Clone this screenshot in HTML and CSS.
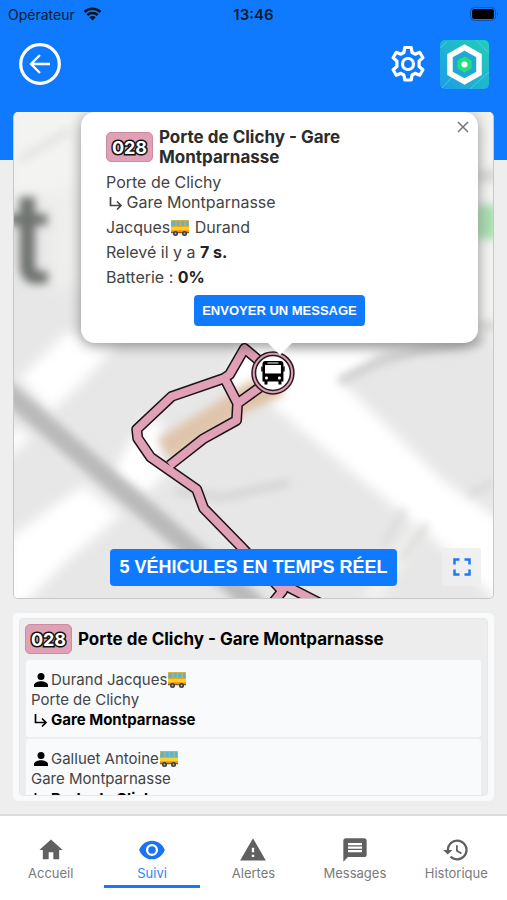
FILE: index.html
```html
<!DOCTYPE html>
<html lang="fr">
<head>
    <meta charset="UTF-8">
    <meta name="viewport" content="width=device-width, initial-scale=1.0">
    <title>Suivi</title>
    <link rel="stylesheet" href="styles.css">
</head>
<body>
    <!-- Shared icons -->
    <svg class="sprite" aria-hidden="true">
        <symbol id="bus-emoji" viewBox="0 0 20 18">
            <rect x="1" y="1" width="18" height="13" rx="2" fill="#f9a51a"/>
            <path d="M2 1h16l1 6H1z" fill="#58b7d3"/>
            <path d="M1 1.500h18M6 2v5M10.500 2v5M15 2v5" stroke="#d7b04b" stroke-width="1.200"/>
            <path d="M1 8h18v3H1z" fill="#ffd02e"/>
            <path d="M1 13.500h18" stroke="#8f5a2b" stroke-width="1.500"/>
            <circle cx="5.500" cy="14.500" r="2.500" fill="#3c3836"/>
            <circle cx="14.500" cy="14.500" r="2.500" fill="#3c3836"/>
            <circle cx="5.500" cy="14.500" r="1" fill="#b5b5b5"/>
            <circle cx="14.500" cy="14.500" r="1" fill="#b5b5b5"/>
        </symbol>
        <symbol id="arrow-sub" viewBox="0 0 16 16">
            <path d="M2.500 2v8.500h10M9 6.500l4 4-4 4" fill="none" stroke="currentColor" stroke-width="1.700"/>
        </symbol>
        <symbol id="person" viewBox="0 0 16 16">
            <circle cx="8" cy="4.500" r="3.500" fill="currentColor"/>
            <path d="M1 15v-2c0-2.500 4.500-3.800 7-3.800s7 1.300 7 3.800v2z" fill="currentColor"/>
        </symbol>
    </svg>

    <div class="status-bar">
        <span class="carrier">Opérateur
            <svg width="19" height="14" viewBox="0 0 19 14">
                <path d="M1.500 5a11.500 11.500 0 0 1 16 0M4.300 8a7.500 7.500 0 0 1 10.400 0" fill="none" stroke="#0a1520" stroke-width="2.500"/>
                <path d="M6.300 10.200a4.600 4.600 0 0 1 6.400 0L9.500 13.500z" fill="#0a1520"/>
            </svg>
        </span>
        <span class="clock">13:46</span>
        <svg class="battery" width="29" height="14" viewBox="0 0 29 14">
            <rect x="0.500" y="0.500" width="25" height="13" rx="4" fill="none" stroke="#0b55ad"/>
            <rect x="2" y="2" width="22" height="10" rx="2.500" fill="#000"/>
            <path d="M27 5q2 2 0 4z" fill="#0b55ad"/>
        </svg>
    </div>

    <header class="toolbar">
        <button class="icon-button" type="button" aria-label="Retour">
            <svg width="44" height="44" viewBox="0 0 44 44" fill="none" stroke="#fff">
                <circle cx="22" cy="22" r="19.300" stroke-width="3.200"/>
                <path d="M32 22H13M22 13l-9 9 9 9" stroke-width="2.300"/>
            </svg>
        </button>
        <div class="toolbar-end">
            <button class="icon-button" type="button" aria-label="Réglages">
                <svg width="36" height="38" viewBox="0 0 36 38" fill="none" stroke="#fff" stroke-width="3.200" stroke-linejoin="round">
                    <path d="M14.800 2.500h6.400l.9 5 3 1.700 4.600-1.900 3.200 5.500-3.800 3.200v5.500l3.800 3.200-3.200 5.500-4.600-1.900-3 1.700-.9 5h-6.400l-.9-5-3-1.700-4.600 1.900-3.200-5.500 3.800-3.200V16l-3.800-3.200 3.200-5.500 4.600 1.900 3-1.700z"/>
                    <circle cx="18" cy="19" r="5.500"/>
                </svg>
            </button>
            <svg class="logo" width="49" height="49" viewBox="0 0 49 49">
                <defs>
                    <linearGradient id="logoFill" x1="0" y1="1" x2="1" y2="0">
                        <stop offset="0" stop-color="#1f9bea"/>
                        <stop offset="1" stop-color="#20cfb4"/>
                    </linearGradient>
                </defs>
                <rect width="49" height="49" rx="5" fill="url(#logoFill)"/>
                <path d="M0 8l7-6M2 48l11-12M36 0l13 13M30 49l19-17" stroke="#48c9e2" fill="none"/>
                <path d="M24.500 7.500l14.500 8v18l-14.500 8-14.500-8v-18z" fill="#1da9d4" stroke="#fff" stroke-width="5.500"/>
                <path d="M24.500 16.500l7 4v8l-7 4-7-4v-8z" fill="#25dd83"/>
                <circle cx="24.500" cy="24.500" r="3" fill="#fff"/>
            </svg>
        </div>
    </header>

    <main class="content">
        <section class="map">
            <svg class="map-canvas" viewBox="14 112 480 487" preserveAspectRatio="xMidYMid slice">
                <defs>
                    <filter id="soft" x="-30%" y="-30%" width="160%" height="160%">
                        <feGaussianBlur stdDeviation="6"/>
                    </filter>
                    <filter id="softer" x="-30%" y="-30%" width="160%" height="160%">
                        <feGaussianBlur stdDeviation="9"/>
                    </filter>
                    <filter id="edge" x="-30%" y="-30%" width="160%" height="160%">
                        <feGaussianBlur stdDeviation="4"/>
                    </filter>
                </defs>
                <rect x="14" y="112" width="480" height="487" fill="#e7e7e7"/>

                <!-- Streets and blocks -->
                <g filter="url(#softer)">
                    <path d="M0 100h110v100H0zM450 100h60v240h-60z" fill="#f3f3f2"/>
                    <path d="M50 190h60v100H50z" fill="#efefee"/>
                </g>
                <g filter="url(#soft)" fill="#fff">
                    <path d="M20 378l48-46 50 12-35 38-32 30z"/>
                    <path d="M8 428l24 8-24 24z"/>
                    <path d="M8 540l75-54 38 30-52 44-45 45H8z"/>
                    <path d="M112 478l22-44 36 36-24 24z"/>
                    <path d="M140 425l20-5 5 30-15 10z"/>
                    <path d="M228 380l15-38h45l-20 45-28 20z"/>
                    <path d="M262 350h125l-46 32 105 101 58 40v85l-60-60-175-145z"/>
                    <path d="M362 600l50-70 12 5-45 68z" fill="#f3f3f0"/>
                </g>
                <g filter="url(#edge)" fill="none">
                    <path d="M4 390l103 88 78 66 74 65" stroke="#bababa" stroke-width="20"/>
                    <path d="M164 450l96-60" stroke="#e0c5ac" stroke-width="24"/>
                    <path d="M240 402l40-18" stroke="#dfc1a6" stroke-width="25"/>
                    <path d="M175 492l50 6 65-15" stroke="#d2d2d1" stroke-width="7"/>
                    <path d="M340 382l40-20 45-12 60-9" stroke="#cbcbca" stroke-width="8"/>
                    <path d="M385 545l20-35M403 560l25-35" stroke="#dcdcdb" stroke-width="7"/>
                    <path d="M470 495l24-12" stroke="#d8d8d7" stroke-width="6"/>
                    <path d="M20 160l50-30" stroke="#e4e4e2" stroke-width="8"/>
                    <path d="M478 205h20v34h-20z" fill="#a9dfb0" stroke="none"/>
                    <path d="M478 170h20v12h-20zM478 322h20v10h-20z" fill="#d8d8d6" stroke="none"/>
                </g>
                <text class="place-name" x="8" y="283" filter="url(#edge)">t</text>

                <!-- Route: dark casing first, then the line colour -->
                <g class="route route-casing">
                    <path id="routeMain" d="M270 370l-25-21-15 26-6 4-52 18-35 33 1 9 13 19 46 32 7 19 40 41 39 42-18 22M283 585l39 20"/>
                    <path id="routeLoop" d="M225 379l13 25-1 17-34 19-33 26M238 404l32-23"/>
                </g>
                <g class="route route-line">
                    <use href="#routeMain"/>
                    <use href="#routeLoop"/>
                </g>

                <!-- Vehicle marker -->
                <g>
                    <circle cx="273.500" cy="373.500" r="21" fill="#e0a0b5" stroke="#2a1b20" stroke-width="1.500"/>
                    <circle cx="273.500" cy="373.500" r="17.500" fill="#fff" stroke="#2a1b20" stroke-width="1.500"/>
                    <path d="M266 361.500h15q3 0 3 3v17.500h-2v3h-3v-3h-11v3h-3v-3h-2v-17.500q0-3 3-3z" fill="#000"/>
                    <path d="M265.500 365.500h16v8.500h-16z" fill="#fff"/>
                    <path d="M262.500 367v5M284.500 367v5" stroke="#000" stroke-width="1.500"/>
                    <path d="M268 363.500h11" stroke="#fff"/>
                    <circle cx="267" cy="378.500" r="1.500" fill="#fff"/>
                    <circle cx="280" cy="378.500" r="1.500" fill="#fff"/>
                </g>
            </svg>

            <div class="popup">
                <button class="popup-close" type="button" aria-label="Fermer">
                    <svg width="12" height="12" viewBox="0 0 12 12"><path d="M1 1l10 10M11 1L1 11" stroke="#757575" stroke-width="1.500"/></svg>
                </button>
                <div class="popup-title">
                    <span class="line-badge">028</span>
                    <h2>Porte de Clichy - Gare Montparnasse</h2>
                </div>
                <p class="trip">Porte de Clichy<br><svg class="icon-small"><use href="#arrow-sub"/></svg> Gare Montparnasse</p>
                <p>Jacques<svg class="emoji"><use href="#bus-emoji"/></svg> Durand</p>
                <p>Relevé il y a <strong>7 s.</strong></p>
                <p>Batterie : <strong>0%</strong></p>
                <button class="button button-small" type="button">ENVOYER UN MESSAGE</button>
            </div>

            <div class="map-actions">
                <button class="button button-large" type="button">5 VÉHICULES EN TEMPS RÉEL</button>
            </div>
            <button class="fullscreen" type="button" aria-label="Plein écran">
                <svg width="18" height="18" viewBox="0 0 18 18"><path d="M1.500 6.500v-5h5M11.500 1.500h5v5M16.500 11.500v5h-5M6.500 16.500h-5v-5" fill="none" stroke="#1a7bf5" stroke-width="2.500"/></svg>
            </button>
        </section>

        <section class="vehicles">
            <div class="vehicles-scroll">
                <div class="vehicles-title">
                    <span class="line-badge">028</span>
                    <h2>Porte de Clichy - Gare Montparnasse</h2>
                </div>
                <ul class="vehicle-list">
                    <li>
                        <div class="driver"><svg class="icon-small"><use href="#person"/></svg>Durand Jacques<svg class="emoji"><use href="#bus-emoji"/></svg></div>
                        <div>Porte de Clichy</div>
                        <div class="destination"><svg class="icon-small"><use href="#arrow-sub"/></svg>Gare Montparnasse</div>
                    </li>
                    <li>
                        <div class="driver"><svg class="icon-small"><use href="#person"/></svg>Galluet Antoine<svg class="emoji"><use href="#bus-emoji"/></svg></div>
                        <div>Gare Montparnasse</div>
                        <div class="destination"><svg class="icon-small"><use href="#arrow-sub"/></svg>Porte de Clichy</div>
                    </li>
                </ul>
            </div>
        </section>
    </main>

    <nav class="tabs">
        <a class="tab" href="#accueil">
            <svg width="28" height="28" viewBox="0 0 24 24"><path d="M10 20v-6h4v6h5v-8h3L12 3 2 12h3v8z"/></svg>
            <span>Accueil</span>
        </a>
        <a class="tab active" href="#suivi">
            <svg width="28" height="28" viewBox="0 0 24 24"><path d="M12 4C7 4 2.700 7.300 1 12c1.700 4.700 6 8 11 8s9.300-3.300 11-8c-1.700-4.700-6-8-11-8zm0 13.200a5.200 5.200 0 1 1 0-10.400 5.200 5.200 0 0 1 0 10.400zM12 8.800a3.200 3.200 0 1 0 0 6.400 3.200 3.200 0 0 0 0-6.400z"/></svg>
            <span>Suivi</span>
        </a>
        <a class="tab" href="#alertes">
            <svg width="28" height="28" viewBox="0 0 24 24"><path d="M1 21h22L12 2 1 21zm12-3h-2v-2h2v2zm0-4h-2v-4h2v4z"/></svg>
            <span>Alertes</span>
        </a>
        <a class="tab" href="#messages">
            <svg width="28" height="28" viewBox="0 0 24 24"><path d="M20 2H4c-1.100 0-2 .9-2 2v18l4-4h14c1.100 0 2-.9 2-2V4c0-1.100-.9-2-2-2zm-2 12H6v-2h12v2zm0-3H6V9h12v2zm0-3H6V6h12v2z"/></svg>
            <span>Messages</span>
        </a>
        <a class="tab" href="#historique">
            <svg width="28" height="28" viewBox="0 0 24 24"><path d="M13 3a9 9 0 0 0-9 9H1l3.900 3.900L9 12H6a7 7 0 1 1 2.060 4.940l-1.420 1.420A9 9 0 1 0 13 3zm-1 5v5l4.280 2.540.72-1.210-3.500-2.080V8H12z"/></svg>
            <span>Historique</span>
        </a>
    </nav>
</body>
</html>
```
FILE: styles.css
```css
* {
    box-sizing: border-box;
}

body {
    margin: 0;
    min-height: 100vh;
    display: flex;
    flex-direction: column;
    font-family: Inter, "Open Sans", sans-serif;
    font-size: 15px;
    color: #444;
    /* the blue header runs behind the top of the map card */
    background: linear-gradient(#107aff 160px, #eeeeee 160px);
}

h2,
p,
ul {
    margin: 0;
    padding: 0;
}

button {
    border: 0;
    padding: 0;
    background: none;
    cursor: pointer;
}

svg {
    flex: none;
}

.sprite {
    position: absolute;
    width: 0;
    height: 0;
}

/* Status bar */
.status-bar {
    display: grid;
    grid-template-columns: 1fr auto 1fr;
    align-items: center;
    height: 28px;
    padding: 0 8px;
    font-size: 14px;
    color: #0a1a2c;
}

.carrier {
    display: flex;
    align-items: center;
    gap: 8px;
}

.clock {
    font-weight: 600;
    font-size: 15px;
}

.battery {
    justify-self: end;
}

/* Toolbar */
.toolbar {
    display: flex;
    align-items: center;
    justify-content: space-between;
    height: 84px;
    padding: 0 18px 12px;
}

.toolbar-end {
    display: flex;
    align-items: center;
    gap: 14px;
}

.icon-button {
    display: flex;
}

/* Content */
.content {
    flex: 1;
    display: flex;
    flex-direction: column;
    gap: 14px;
    padding: 0 13px 13px;
}

.map {
    position: relative;
    flex: 1;
    min-height: 400px;
    display: flex;
    flex-direction: column;
    justify-content: flex-end;
    border: 1px solid #c8c8c8;
    border-top: 0;
    border-radius: 5px;
    overflow: hidden;
}

.map-canvas {
    position: absolute;
    width: 100%;
    height: 100%;
}

.place-name {
    font-family: Roboto, sans-serif;
    font-size: 130px;
    font-weight: 500;
    fill: #6f7370;
}

.route {
    fill: none;
    stroke-linejoin: round;
}

.route-casing {
    stroke: #1c1316;
    stroke-width: 11px;
}

.route-line {
    stroke: #e0a0b5;
    stroke-width: 8px;
}

.popup {
    position: absolute;
    top: 0;
    left: 67px;
    right: 15px;
    padding: 15px 25px 17px;
    border-radius: 14px;
    background: #fff;
    box-shadow: 0 3px 14px rgba(0, 0, 0, 0.4);
    font-size: 16px;
    line-height: 20px;
}

.popup::after {
    content: "";
    position: absolute;
    top: 100%;
    left: 50%;
    margin-left: -12px;
    border: 12px solid transparent;
    border-top-color: #fff;
    border-bottom: 0;
}

.popup p {
    margin-top: 5px;
}

.popup strong {
    color: #222;
}

.popup .icon-small {
    margin-right: -2px;
}

.popup-title {
    display: flex;
    align-items: center;
    gap: 6px;
}

.popup-title h2 {
    max-width: 220px;
    font-size: 17px;
    color: #2c2c2c;
}

.popup-close {
    position: absolute;
    top: 9px;
    right: 9px;
    display: flex;
}

.line-badge {
    flex: none;
    width: 47px;
    height: 30px;
    border: 1px solid #c98da0;
    border-radius: 5px;
    background: #e0a0b5;
    color: #fff;
    font-size: 18px;
    font-weight: 700;
    line-height: 29px;
    text-align: center;
    -webkit-text-stroke: 3px #111;
    paint-order: stroke fill;
}

.icon-small {
    width: 16px;
    height: 16px;
    margin: 0 2px;
    vertical-align: -3px;
}

.emoji {
    width: 20px;
    height: 18px;
    vertical-align: -4px;
}

.button {
    display: block;
    margin: 0 auto;
    border-radius: 4px;
    background: #107aff;
    color: #fff;
    font-family: "Liberation Sans", Arial, sans-serif;
    font-weight: 700;
}

.button-small {
    margin-top: 8px;
    padding: 0 8px;
    font-size: 13px;
    line-height: 31px;
}

.map-actions {
    position: relative;
    padding-bottom: 12px;
}

.button-large {
    padding: 0 9px;
    font-size: 18px;
    line-height: 37px;
}

.fullscreen {
    position: absolute;
    right: 12px;
    bottom: 12px;
    display: flex;
    align-items: center;
    justify-content: center;
    width: 39px;
    height: 38px;
    border-radius: 3px;
    background: rgba(238, 238, 238, 0.9);
}

/* Vehicle list */
.vehicles {
    height: 188px;
    padding: 5px 6px;
    border-radius: 5px;
    background: #f8fafb;
}

.vehicles-scroll {
    height: 100%;
    padding: 5px;
    border: 1px solid #e6e8e9;
    border-radius: 4px;
    background: #ededed;
    overflow-y: auto;
    scrollbar-width: none;
}

.vehicles-title {
    display: flex;
    align-items: center;
    gap: 6px;
    padding-bottom: 5px;
}

.vehicles-title h2 {
    font-size: 17px;
    line-height: 20px;
    color: #000;
}

.vehicle-list {
    list-style: none;
    line-height: 20px;
}

.vehicle-list li {
    padding: 10px 5px 7px;
    border: 1px solid #eceeef;
    border-radius: 4px;
    background: #f8fafc;
}

.driver .icon-small {
    color: #000;
}

.destination {
    font-weight: 700;
    color: #000;
}

/* Bottom tabs */
.tabs {
    display: grid;
    grid-template-columns: repeat(5, 1fr);
    height: 86px;
    border-top: 2px solid #dcdcdc;
    background: #fff;
}

.tab {
    display: flex;
    flex-direction: column;
    align-items: center;
    height: 72px;
    margin: 0 3px;
    padding-top: 20px;
    border-bottom: 3px solid transparent;
    font-size: 13px;
    line-height: 18px;
    color: #7a7a7a;
    text-decoration: none;
}

.tab svg {
    fill: #606060;
}

.tab.active {
    border-bottom-color: #1a78f5;
    color: #2f86f7;
}

.tab.active svg {
    fill: #1a73f0;
}
```
